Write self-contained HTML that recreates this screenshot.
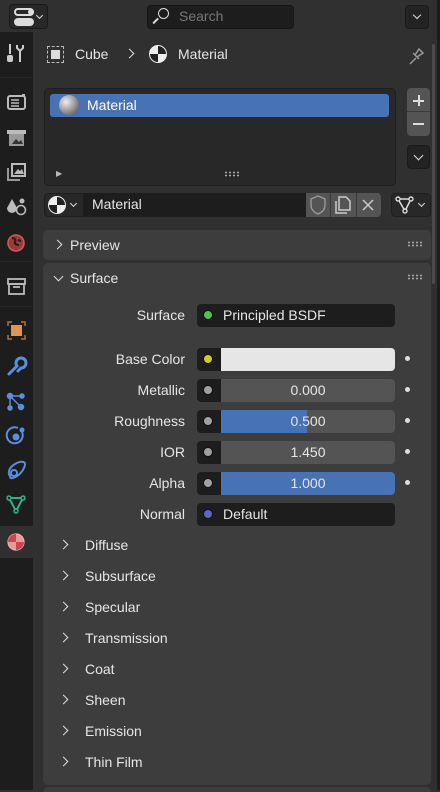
<!DOCTYPE html>
<html><head><meta charset="utf-8"><style>
*{margin:0;padding:0;box-sizing:border-box}
body{width:440px;height:790px;background:#303030;font-family:"Liberation Sans","DejaVu Sans",sans-serif;font-size:14px;color:#e6e6e6;position:relative;overflow:hidden}
.a{position:absolute}
.t{position:absolute;white-space:nowrap;line-height:16px}
.r{text-align:right}
.dot{position:absolute;width:10px;height:10px;border-radius:50%;border:1.5px solid #111}
.sd{position:absolute;width:5px;height:5px;border-radius:50%;background:#ddd}
.chev{position:absolute;width:7px;height:7px;border-right:1.5px solid #ddd;border-top:1.5px solid #ddd;transform:rotate(45deg)}
.grip{position:absolute;width:16px;height:6px;background-image:radial-gradient(circle,#aaa 0.9px,transparent 1px);background-size:4px 3px}
svg{position:absolute}
</style></head><body>
<!-- header -->
<div class="a" style="left:0;top:0;width:440px;height:32px;background:#303030"></div>
<div class="a" style="left:437px;top:0;width:3px;height:790px;background:#1d1d1d"></div>
<div class="a" style="left:9px;top:4px;width:39px;height:25px;background:#282828;border:1px solid #1a1a1a;border-radius:4px"></div>
<div class="a" style="left:14px;top:8px;width:20px;height:8px;border:2px solid #ddd;border-radius:4px"></div>
<div class="a" style="left:14px;top:18px;width:20px;height:8px;background:#ddd;border-radius:4px"></div>
<div class="a" style="left:28px;top:9px;width:6px;height:6px;background:#ddd;border-radius:3px"></div>
<div class="chev" style="left:37px;top:13px;width:5px;height:5px;transform:rotate(135deg)"></div>
<div class="a" style="left:147px;top:5px;width:147px;height:24px;background:#1d1d1d;border:1px solid #151515;border-radius:4px"></div>
<div class="a" style="left:158px;top:8px;width:11px;height:11px;border:1.6px solid #ddd;border-radius:50%"></div>
<div class="a" style="left:152px;top:20px;width:7px;height:1.6px;background:#ddd;transform:rotate(-45deg)"></div>
<div class="t" style="left:179px;top:8px;color:#777">Search</div>
<div class="a" style="left:405px;top:5px;width:24px;height:24px;background:#232323;border:1px solid #1a1a1a;border-radius:4px"></div>
<div class="chev" style="left:414px;top:12px;width:6px;height:6px;transform:rotate(135deg)"></div>
<!-- sidebar -->
<div class="a" style="left:0;top:32px;width:33px;height:758px;background:#1d1d1d"></div>
<div class="a" style="left:0;top:77px;width:33px;height:1px;background:#282828"></div>
<div class="a" style="left:0;top:261px;width:33px;height:1px;background:#282828"></div>
<div class="a" style="left:0;top:306px;width:33px;height:1px;background:#282828"></div>
<div class="a" style="left:0;top:526px;width:33px;height:32px;background:#303030"></div>
<svg width="33" height="790" style="left:0;top:0">
 <!-- tool -->
 <g stroke="#ccc" stroke-width="2" fill="none"><line x1="10" y1="44" x2="10" y2="54"/><path d="M17 45v3l3 3 3-3v-3M20 51v11"/></g>
 <rect x="7" y="55" width="6" height="7" rx="2" fill="#ccc"/>
 <!-- render -->
 <rect x="8" y="96" width="17" height="13" rx="2" fill="none" stroke="#bbb" stroke-width="2"/>
 <line x1="11" y1="100" x2="19" y2="100" stroke="#bbb" stroke-width="1.5"/><line x1="11" y1="103" x2="19" y2="103" stroke="#bbb" stroke-width="1.5"/><line x1="11" y1="106" x2="19" y2="106" stroke="#bbb" stroke-width="1.5"/>
 <rect x="22" y="94" width="3" height="2" fill="#bbb"/>
 <!-- output -->
 <rect x="7" y="130" width="19" height="4" fill="#bbb"/>
 <rect x="9" y="134" width="15" height="12" fill="#999"/>
 <path d="M12 144l4-5 3 3 2-2 2 4z" fill="#333"/>
 <!-- view layer -->
 <path d="M8 168v12h12" fill="none" stroke="#999" stroke-width="2"/>
 <rect x="12" y="164" width="13" height="12" fill="none" stroke="#bbb" stroke-width="2"/>
 <path d="M14 174l4-5 2 2 2-2 2 5z" fill="#bbb"/>
 <!-- scene -->
 <path d="M12 199l-5 9a5 5 0 0 0 10 0z" fill="#bbb"/>
 <circle cx="21" cy="210" r="4.5" fill="#1d1d1d" stroke="#bbb" stroke-width="1.6"/>
 <circle cx="22" cy="201" r="2.5" fill="#bbb"/>
 <!-- world -->
 <circle cx="16" cy="243" r="8" fill="#9a3a3a" stroke="#d65555" stroke-width="1.6"/>
 <path d="M12 238c3 0 4 2 3 4s2 3 4 3M18 240l3 1" stroke="#1d1d1d" stroke-width="2" fill="none"/>
 <!-- collection -->
 <rect x="8" y="279" width="17" height="5" fill="none" stroke="#bbb" stroke-width="1.8"/>
 <rect x="9" y="284" width="15" height="10" fill="none" stroke="#bbb" stroke-width="1.8"/>
 <line x1="13" y1="287" x2="20" y2="287" stroke="#bbb" stroke-width="1.8"/>
 <!-- object -->
 <path d="M8 326v-4h4M21 322h4v4M25 335v4h-4M12 339h-4v-4" stroke="#b07040" stroke-width="1.5" fill="none"/>
 <rect x="11" y="325" width="11" height="11" fill="#e0944f"/>
 <!-- modifier wrench -->
 <path d="M9 374l8-8M17 366a5 5 0 1 1 4 2l-3 3" stroke="#5b8ede" stroke-width="3" fill="none" stroke-linecap="round"/>
 <!-- particles -->
 <g stroke="#5b8ede" stroke-width="1.5" fill="#5b8ede"><line x1="10" y1="396" x2="22" y2="396"/><line x1="10" y1="396" x2="21" y2="407"/><line x1="10" y1="396" x2="10" y2="408"/><circle cx="10" cy="396" r="2.5"/><circle cx="22" cy="396" r="2"/><circle cx="21" cy="407" r="2.5"/><circle cx="10" cy="408" r="2"/></g>
 <!-- physics -->
 <path d="M22 432a8 8 0 1 1-4-4" stroke="#5b8ede" stroke-width="2" fill="none"/>
 <circle cx="16" cy="437" r="3.5" fill="#5b8ede"/><circle cx="22" cy="430" r="2.5" fill="#5b8ede"/>
 <!-- constraints -->
 <path d="M10 476c-3-4 0-9 5-12s10-3 10 0-3 9-8 12-7 3-7 0z" stroke="#5b8ede" stroke-width="2" fill="none"/>
 <circle cx="14" cy="473" r="3" fill="none" stroke="#5b8ede" stroke-width="2"/>
 <!-- data -->
 <path d="M9 498h14l-7 13z" fill="none" stroke="#2db38a" stroke-width="2"/>
 <g fill="#1d1d1d" stroke="#2db38a" stroke-width="1.5"><circle cx="9" cy="498" r="2"/><circle cx="23" cy="498" r="2"/><circle cx="16" cy="511" r="2"/></g>
 <!-- material -->
 <circle cx="16" cy="542" r="8" fill="#e89a9a" stroke="#f0b0b0" stroke-width="1.2"/>
 <path d="M16 542h8a8 8 0 0 1-8 8z M16 542h-8a8 8 0 0 1 8-8z" fill="#c9454f"/>
</svg>
<!-- scrollbar -->
<div class="a" style="left:432px;top:44px;width:3px;height:240px;background:#4a4a4a;border-radius:2px"></div>
<!-- breadcrumb -->
<div class="a" style="left:47px;top:46px;width:17px;height:17px;border:1.5px dashed #bbb"></div>
<div class="a" style="left:51px;top:50px;width:9px;height:9px;background:#ddd"></div>
<div class="t" style="left:75px;top:46px">Cube</div>
<div class="chev" style="left:126px;top:50px"></div>
<div class="a" style="left:149px;top:45px;width:18px;height:18px;border-radius:50%;background:conic-gradient(#222 0 90deg,#eee 90deg 180deg,#222 180deg 270deg,#eee 270deg);border:1.5px solid #eee"></div>
<div class="t" style="left:178px;top:46px">Material</div>
<svg width="20" height="22" style="left:406px;top:44px"><path d="M4 20l6-6M7 9l6 6M9 11l4-6 4 4-6 4" stroke="#999" stroke-width="1.5" fill="none"/></svg>
<!-- list -->
<div class="a" style="left:44px;top:88px;width:352px;height:98px;background:#282828;border:1px solid #1f1f1f;border-radius:5px"></div>
<div class="a" style="left:50px;top:94px;width:339px;height:23px;background:#4772b3;border-radius:3px"></div>
<div class="a" style="left:59px;top:95px;width:20px;height:20px;border-radius:50%;background:radial-gradient(circle at 35% 35%,#eee,#777 70%,#444)"></div>
<div class="t" style="left:87px;top:97px;color:#fff">Material</div>
<div class="t" style="left:56px;top:166px;font-size:8px;color:#bbb">▶</div>
<div class="grip" style="left:224px;top:171px"></div>
<div class="a" style="left:407px;top:88px;width:23px;height:48px;background:#545454;border-radius:4px"></div>
<div class="a" style="left:407px;top:111px;width:23px;height:1px;background:#3a3a3a"></div>
<div class="a" style="left:413px;top:100px;width:11px;height:1.6px;background:#ddd"></div>
<div class="a" style="left:418px;top:95px;width:1.6px;height:11px;background:#ddd"></div>
<div class="a" style="left:413px;top:123px;width:11px;height:1.6px;background:#ddd"></div>
<div class="a" style="left:407px;top:145px;width:23px;height:24px;background:#232323;border:1px solid #1a1a1a;border-radius:4px"></div>
<div class="chev" style="left:415px;top:152px;transform:rotate(135deg)"></div>
<!-- material row -->
<div class="a" style="left:44px;top:193px;width:40px;height:24px;background:#282828;border:1px solid #1f1f1f;border-radius:4px 0 0 4px"></div>
<div class="a" style="left:48px;top:196px;width:18px;height:18px;border-radius:50%;background:conic-gradient(#222 0 90deg,#eee 90deg 180deg,#222 180deg 270deg,#eee 270deg);border:1.5px solid #eee"></div>
<div class="chev" style="left:71px;top:201px;width:5px;height:5px;transform:rotate(135deg)"></div>
<div class="a" style="left:84px;top:193px;width:222px;height:24px;background:#1d1d1d"></div>
<div class="t" style="left:92px;top:196px">Material</div>
<div class="a" style="left:306px;top:193px;width:75px;height:24px;background:#545454;border-radius:0 4px 4px 0"></div>
<div class="a" style="left:330px;top:193px;width:1px;height:24px;background:#3a3a3a"></div>
<div class="a" style="left:356px;top:193px;width:1px;height:24px;background:#3a3a3a"></div>
<svg width="75" height="24" style="left:306px;top:193px">
 <path d="M5 6l7-3 7 3v6c0 5-4 8-7 9-3-1-7-4-7-9z" fill="none" stroke="#999" stroke-width="1.4"/>
 <path d="M30 8v12h11" fill="none" stroke="#ccc" stroke-width="1.5"/>
 <path d="M33 4h7l4 4v9h-11z" fill="none" stroke="#ccc" stroke-width="1.5"/>
 <path d="M57 7l10 10M67 7l-10 10" stroke="#ccc" stroke-width="1.5"/>
</svg>
<div class="a" style="left:391px;top:193px;width:40px;height:24px;background:#282828;border:1px solid #1f1f1f;border-radius:4px"></div>
<svg width="24" height="24" style="left:393px;top:193px"><path d="M5 6h13l-6 12z" fill="none" stroke="#ddd" stroke-width="1.5"/><g fill="#282828" stroke="#ddd" stroke-width="1.4"><circle cx="5" cy="6" r="2"/><circle cx="18" cy="6" r="2"/><circle cx="12" cy="18" r="2"/></g></svg>
<div class="chev" style="left:419px;top:201px;width:5px;height:5px;transform:rotate(135deg)"></div>
<!-- preview panel -->
<div class="a" style="left:43px;top:230px;width:388px;height:30px;background:#3d3d3d;border-radius:5px"></div>
<div class="chev" style="left:54px;top:241px"></div>
<div class="t" style="left:70px;top:237px">Preview</div>
<div class="grip" style="left:407px;top:241px"></div>
<!-- surface panel -->
<div class="a" style="left:43px;top:263px;width:388px;height:522px;background:#3d3d3d;border-radius:5px"></div>
<div class="chev" style="left:55px;top:273px;transform:rotate(135deg)"></div>
<div class="t" style="left:70px;top:270px">Surface</div>
<div class="grip" style="left:407px;top:274px"></div>
<div class="a" style="left:43px;top:787px;width:388px;height:5px;background:#3d3d3d;border-radius:5px 5px 0 0"></div>

<div class="t r" style="left:60px;width:125px;top:307px">Surface</div>
<div class="a" style="left:197px;top:304px;width:198px;height:23px;background:#1d1d1d;border-radius:4px"></div>
<div class="dot" style="left:203px;top:310px;background:#4fc24f"></div>
<div class="t" style="left:223px;top:307px">Principled BSDF</div>

<div class="t r" style="left:60px;width:125px;top:351px">Base Color</div>
<div class="a" style="left:197px;top:348px;width:198px;height:23px;background:#1d1d1d;border-radius:4px"></div>
<div class="a" style="left:221px;top:348px;width:174px;height:23px;background:#e6e6e6;border-radius:0 4px 4px 0"></div>
<div class="dot" style="left:203px;top:354px;background:#cccc22"></div>
<div class="sd" style="left:405px;top:356px"></div>

<div class="t r" style="left:60px;width:125px;top:382px">Metallic</div>
<div class="a" style="left:197px;top:379px;width:198px;height:23px;background:#1d1d1d;border-radius:4px"></div>
<div class="a" style="left:221px;top:379px;width:174px;height:23px;background:#545454;border-radius:0 4px 4px 0"></div>
<div class="dot" style="left:203px;top:385px;background:#a1a1a1"></div>
<div class="t" style="left:221px;width:174px;text-align:center;top:382px">0.000</div>
<div class="sd" style="left:405px;top:387px"></div>

<div class="t r" style="left:60px;width:125px;top:413px">Roughness</div>
<div class="a" style="left:197px;top:410px;width:198px;height:23px;background:#1d1d1d;border-radius:4px"></div>
<div class="a" style="left:221px;top:410px;width:174px;height:23px;background:#545454;border-radius:0 4px 4px 0"></div>
<div class="a" style="left:221px;top:410px;width:86px;height:23px;background:#4772b3"></div>
<div class="dot" style="left:203px;top:416px;background:#a1a1a1"></div>
<div class="t" style="left:221px;width:174px;text-align:center;top:413px">0.500</div>
<div class="sd" style="left:405px;top:418px"></div>

<div class="t r" style="left:60px;width:125px;top:444px">IOR</div>
<div class="a" style="left:197px;top:441px;width:198px;height:23px;background:#1d1d1d;border-radius:4px"></div>
<div class="a" style="left:221px;top:441px;width:174px;height:23px;background:#545454;border-radius:0 4px 4px 0"></div>
<div class="dot" style="left:203px;top:447px;background:#a1a1a1"></div>
<div class="t" style="left:221px;width:174px;text-align:center;top:444px">1.450</div>
<div class="sd" style="left:405px;top:449px"></div>

<div class="t r" style="left:60px;width:125px;top:475px">Alpha</div>
<div class="a" style="left:197px;top:472px;width:198px;height:23px;background:#1d1d1d;border-radius:4px"></div>
<div class="a" style="left:221px;top:472px;width:174px;height:23px;background:#4772b3;border-radius:0 4px 4px 0"></div>
<div class="dot" style="left:203px;top:478px;background:#a1a1a1"></div>
<div class="t" style="left:221px;width:174px;text-align:center;top:475px">1.000</div>
<div class="sd" style="left:405px;top:480px"></div>

<div class="t r" style="left:60px;width:125px;top:506px">Normal</div>
<div class="a" style="left:197px;top:503px;width:198px;height:23px;background:#1d1d1d;border-radius:4px"></div>
<div class="dot" style="left:203px;top:509px;background:#6363c7"></div>
<div class="t" style="left:223px;top:506px">Default</div>

<div class="chev" style="left:60px;top:541px"></div><div class="t" style="left:85px;top:537px">Diffuse</div>
<div class="chev" style="left:60px;top:572px"></div><div class="t" style="left:85px;top:568px">Subsurface</div>
<div class="chev" style="left:60px;top:603px"></div><div class="t" style="left:85px;top:599px">Specular</div>
<div class="chev" style="left:60px;top:634px"></div><div class="t" style="left:85px;top:630px">Transmission</div>
<div class="chev" style="left:60px;top:665px"></div><div class="t" style="left:85px;top:661px">Coat</div>
<div class="chev" style="left:60px;top:696px"></div><div class="t" style="left:85px;top:692px">Sheen</div>
<div class="chev" style="left:60px;top:727px"></div><div class="t" style="left:85px;top:723px">Emission</div>
<div class="chev" style="left:60px;top:758px"></div><div class="t" style="left:85px;top:754px">Thin Film</div>
</body></html>
